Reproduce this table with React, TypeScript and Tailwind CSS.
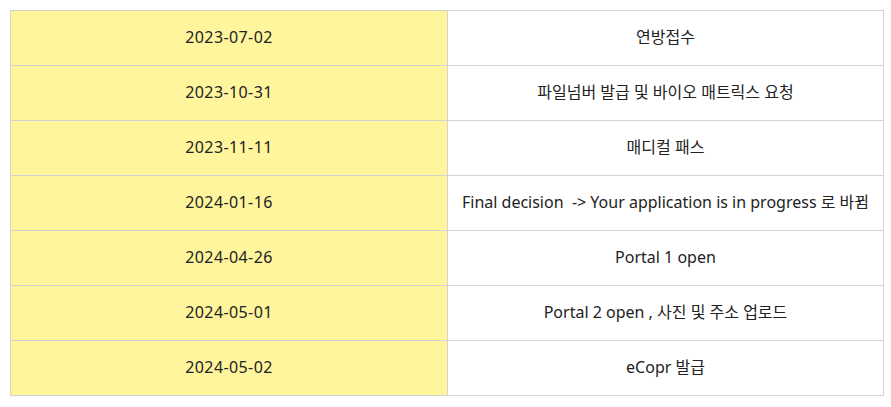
import React from "react";

const rows: [string, string][] = [
  ["2023-07-02", "연방접수"],
  ["2023-10-31", "파일넘버 발급 및 바이오 매트릭스 요청"],
  ["2023-11-11", "매디컬 패스"],
  ["2024-01-16", "Final decision  -> Your application is in progress 로 바뀜"],
  ["2024-04-26", "Portal 1 open"],
  ["2024-05-01", "Portal 2 open , 사진 및 주소 업로드"],
  ["2024-05-02", "eCopr 발급"],
];

export default function App() {
  return (
    <div className="bg-white p-[10px] w-[891px] h-[407px] font-['Noto_Sans','Noto_Sans_CJK_KR',sans-serif] text-[16px] text-[#222]">
      <table className="border-collapse w-[874px] table-fixed">
        <colgroup>
          <col className="w-[437px]" />
          <col />
        </colgroup>
        <tbody>
          {rows.map(([date, text]) => (
            <tr key={date} className="h-[55px]">
              <td className="border border-[#d3d3d3] bg-[#fff59d] text-center align-middle whitespace-pre pb-[3px] tracking-[0.4px]">
                {date}
              </td>
              <td className="border border-[#d3d3d3] bg-white text-center align-middle whitespace-pre pb-[3px]">
                {text}
              </td>
            </tr>
          ))}
        </tbody>
      </table>
    </div>
  );
}
